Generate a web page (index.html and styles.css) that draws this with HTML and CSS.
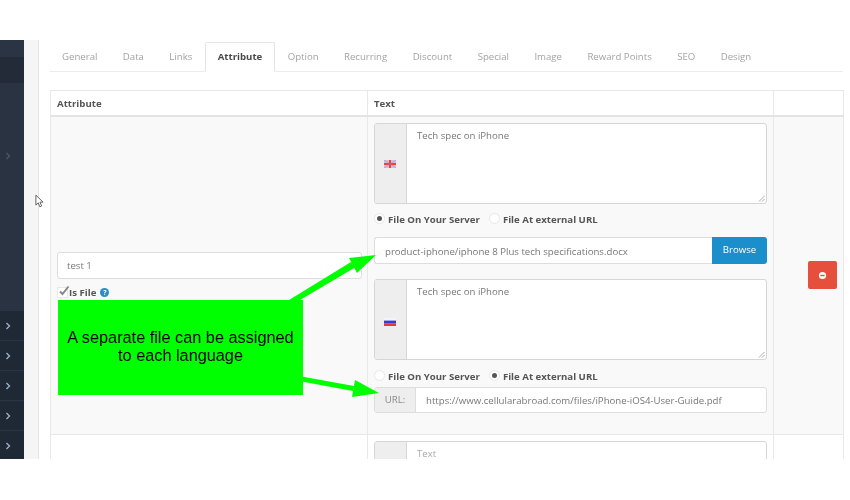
FILE: index.html
```html
<!DOCTYPE html>
<html lang="en">
<head>
<meta charset="utf-8">
<title>Product attributes</title>
<link rel="stylesheet" href="styles.css">
</head>
<body>
<div class="shot">
  <aside class="sidebar">
    <div class="side-top"></div>
    <div class="side-active"></div>
    <div class="side-main"><svg class="chev dim" viewBox="0 0 6 8"><path d="M1.5 1l3 3-3 3"/></svg></div>
    <div class="side-row"><svg class="chev" viewBox="0 0 6 8"><path d="M1.5 1l3 3-3 3"/></svg></div>
    <div class="side-row"><svg class="chev" viewBox="0 0 6 8"><path d="M1.5 1l3 3-3 3"/></svg></div>
    <div class="side-row"><svg class="chev" viewBox="0 0 6 8"><path d="M1.5 1l3 3-3 3"/></svg></div>
    <div class="side-row"><svg class="chev" viewBox="0 0 6 8"><path d="M1.5 1l3 3-3 3"/></svg></div>
    <div class="side-row"><svg class="chev" viewBox="0 0 6 8"><path d="M1.5 1l3 3-3 3"/></svg></div>
  </aside>
  <div class="gutter"></div>
  <main class="content">
    <ul class="tabs">
      <li>General</li><li>Data</li><li>Links</li><li class="active">Attribute</li><li>Option</li><li>Recurring</li><li>Discount</li><li>Special</li><li>Image</li><li>Reward Points</li><li>SEO</li><li>Design</li>
    </ul>
    <table class="attrs">
      <thead>
        <tr><th class="col-a">Attribute</th><th class="col-b">Text</th><th class="col-c"></th></tr>
      </thead>
      <tbody>
        <tr class="odd">
          <td class="attr-cell">
            <div class="field">test 1</div>
            <div class="isfile">
              <span class="check"><svg viewBox="0 0 12 12"><path d="M2 6.5l2.5 2.5L10.5 1.5"/></svg></span>
              <b>Is File</b>
              <span class="help">?</span>
            </div>
          </td>
          <td class="text-cell">
            <div class="lang-group">
              <div class="addon flag-addon">
                <svg class="flag" viewBox="0 0 12 8"><rect width="12" height="8" fill="#d4bfd6"/><path d="M0 4h12M6 0v8" stroke="#f0403f" stroke-width="2"/><path d="M0 0l12 8M12 0L0 8" stroke="#8f8fc0" stroke-width=".8" opacity=".6"/></svg>
              </div>
              <div class="area">Tech spec on iPhone<svg class="grip" viewBox="0 0 8 8"><path d="M7.5 1L1 7.5M7.5 4.5L4.5 7.5"/></svg></div>
            </div>
            <div class="radios">
              <span class="radio on"></span><b>File On Your Server</b>
              <span class="radio"></span><b>File At external URL</b>
            </div>
            <div class="file-group">
              <div class="file-path">product-iphone/iphone 8 Plus tech specifications.docx</div>
              <div class="browse">Browse</div>
            </div>
            <div class="lang-group second">
              <div class="addon flag-addon">
                <svg class="flag" viewBox="0 0 12 8"><rect width="12" height="2.8" fill="#f4f4f8"/><rect y="2.6" width="12" height="2.8" fill="#3a3ad0"/><rect y="5.3" width="12" height="2.7" fill="#e8383c"/></svg>
              </div>
              <div class="area">Tech spec on iPhone<svg class="grip" viewBox="0 0 8 8"><path d="M7.5 1L1 7.5M7.5 4.5L4.5 7.5"/></svg></div>
            </div>
            <div class="radios lower">
              <span class="radio"></span><b>File On Your Server</b>
              <span class="radio on"></span><b>File At external URL</b>
            </div>
            <div class="url-group">
              <div class="addon url-addon">URL:</div>
              <div class="url-value">https://www.cellularabroad.com/files/iPhone-iOS4-User-Guide.pdf</div>
            </div>
          </td>
          <td class="action-cell">
            <div class="remove"><svg viewBox="0 0 10 10"><circle cx="5" cy="5" r="4"/><rect x="2.7" y="4.2" width="4.6" height="1.6"/></svg></div>
          </td>
        </tr>
        <tr>
          <td></td>
          <td class="text-cell">
            <div class="lang-group">
              <div class="addon flag-addon"></div>
              <div class="area placeholder">Text</div>
            </div>
          </td>
          <td></td>
        </tr>
      </tbody>
    </table>
  </main>
  <svg class="cursor" viewBox="0 0 10 15"><path d="M1 1v11l2.6-2.4L5.4 14l2-1-1.9-4.2H9z"/></svg>
  <svg class="arrows" viewBox="0 0 850 419">
    <polygon points="289,260 300,260 355,227.5 351,222"/>
    <polygon points="376,215 349,218 357,233"/>
    <polygon points="303,336.7 303,341.7 353,351 354,346"/>
    <polygon points="379,353 355,340 352,357"/>
  </svg>
  <div class="callout">A separate file can be assigned to each language</div>
</div>
</body>
</html>
```

FILE: styles.css
```css
* { box-sizing: border-box; }
html, body { margin: 0; background: #fff; }
body { height: 500px; overflow: hidden; padding-top: 40px; font-family: "Open Sans", sans-serif; font-size: 9.65px; color: #777; }

.shot { position: relative; display: flex; height: 419px; overflow: hidden; filter: blur(.35px); }

.sidebar { width: 24px; flex: none; display: flex; flex-direction: column; background: #2a3342; }
.side-top { height: 17px; background: #2b3443; flex: none; }
.side-active { height: 26px; background: #232b38; flex: none; }
.side-main { height: 227px; flex: none; padding: 69px 0 0 5px; }
.side-row { height: 30px; flex: none; background: #1f2835; border-top: 1px solid #2a3442; display: flex; align-items: center; padding-left: 5px; }
.chev { width: 6px; height: 8px; display: block; }
.chev path { fill: none; stroke: #9db6c9; stroke-width: 1.3; }
.chev.dim path { stroke: #4a596b; }

.gutter { width: 15px; flex: none; background: #f5f5f5; border-right: 1px solid #e4e4e4; }

.content { flex: 1; min-width: 0; padding: 2px 7px 0 11px; background: #fff; }

.tabs { display: flex; margin: 0; padding: 0; list-style: none; height: 30px; border-bottom: 1px solid #ececec; color: #a3a3a3; }
.tabs li { padding: 0 11.7px; border: 1px solid transparent; line-height: 28px; height: 30px; }
.tabs li:first-child { margin-left: -.7px; }
.tabs li.active { background: #fff; border-color: #e4e4e4; border-bottom-color: #fff; border-radius: 2px 2px 0 0; color: #4a4a4a; font-weight: 700; }

.attrs { width: 793px; margin-top: 18px; table-layout: fixed; border-collapse: collapse; border: 1px solid #e8e8e8; }
.attrs th { height: 25px; padding: 2px 6px 0; text-align: left; font-weight: 700; color: #555; border: 1px solid #e8e8e8; border-bottom: 2px solid #e4e4e4; }
.col-a { width: 317px; }
.col-b { width: 406px; }
.col-c { width: 70px; }
.attrs td { padding: 6px; border: 1px solid #e8e8e8; vertical-align: middle; }
.odd td { background: #f9f9f9; }

.attr-cell { padding-right: 5px !important; }
.field { height: 27px; padding: 0 9px; line-height: 25px; background: #fff; border: 1px solid #ddd; border-radius: 3px; }
.isfile { display: flex; align-items: center; height: 13px; margin-top: 7px; color: #555; }
.isfile b { margin-left: 1px; }
.check { width: 11px; height: 11px; background: #fff; border: 1px solid #e8e8e8; display: block; position: relative; }
.check svg { position: absolute; left: 0; top: -3px; width: 12px; height: 12px; }
.check path { fill: none; stroke: #888; stroke-width: 2; }
.help { width: 9px; height: 9px; margin-left: 4px; border-radius: 50%; background: #2a8cc8; color: #fff; font-size: 7px; font-weight: 700; line-height: 9px; text-align: center; }

.lang-group { display: flex; height: 81px; border: 1px solid #d6d6d6; border-radius: 3px; background: #fff; overflow: hidden; }
.lang-group.second { margin-top: 15px; }
.addon { background: #eee; display: flex; align-items: center; justify-content: center; flex: none; }
.flag-addon { width: 32px; border-right: 1px solid #d6d6d6; padding: 2px 1px 0 0; }
.second .flag-addon { padding-top: 5px; }
.flag { width: 12px; height: 8px; display: block; }
.area { position: relative; flex: 1; padding: 5px 10px; line-height: 14px; color: #777; }
.area.placeholder { color: #aaa; }
.grip { position: absolute; right: 1px; bottom: 1px; width: 7px; height: 7px; }
.grip path { fill: none; stroke: #888; stroke-width: .8; }

.radios { display: flex; align-items: center; height: 14px; margin-top: 9px; color: #555; }
.radios.lower { margin-top: 10px; }
.radios b { margin-right: 9px; }
.radio { width: 11px; height: 11px; margin: -3px 3px 0 0; border-radius: 50%; background: #fff; border: 1px solid #e8e8e8; display: flex; align-items: center; justify-content: center; }
.radio.on::before { content: ""; width: 5px; height: 5px; border-radius: 50%; background: #555; }

.file-group { display: flex; height: 27px; margin-top: 10px; }
.file-path { flex: 1; padding: 0 10px; line-height: 27px; background: #fff; border: 1px solid #ddd; border-right: 0; border-radius: 3px 0 0 3px; }
.browse { width: 55px; line-height: 26px; text-align: center; background: #1b8fcc; color: #fff; border-radius: 0 3px 3px 0; }

.url-group { display: flex; height: 26px; margin-top: 3px; margin-bottom: 15px; border: 1px solid #ddd; border-radius: 3px; overflow: hidden; background: #fff; }
.url-addon { width: 41px; border-right: 1px solid #ddd; color: #888; }
.url-value { flex: 1; padding: 0 10px; line-height: 25px; }

.remove { width: 29px; height: 28px; margin-left: auto; background: #e74f3d; border-radius: 2px; display: flex; align-items: center; justify-content: center; }
.remove svg { width: 9px; height: 9px; }
.remove circle { fill: #fff; }
.remove rect { fill: #e74f3d; }

.callout { position: absolute; left: 58px; top: 260px; width: 245px; height: 95px; padding: 28px 6px 0; background: #00ff00; color: #000; font-family: "Liberation Sans", Arial, sans-serif; font-size: 16.3px; line-height: 18px; text-align: center; }
.arrows { position: absolute; left: 0; top: 0; width: 850px; height: 419px; pointer-events: none; }
.arrows polygon { fill: #00ff00; }
.cursor { position: absolute; left: 35px; top: 154px; width: 9px; height: 14px; }
.cursor path { fill: #fff; stroke: #555; stroke-width: 1; }
```
